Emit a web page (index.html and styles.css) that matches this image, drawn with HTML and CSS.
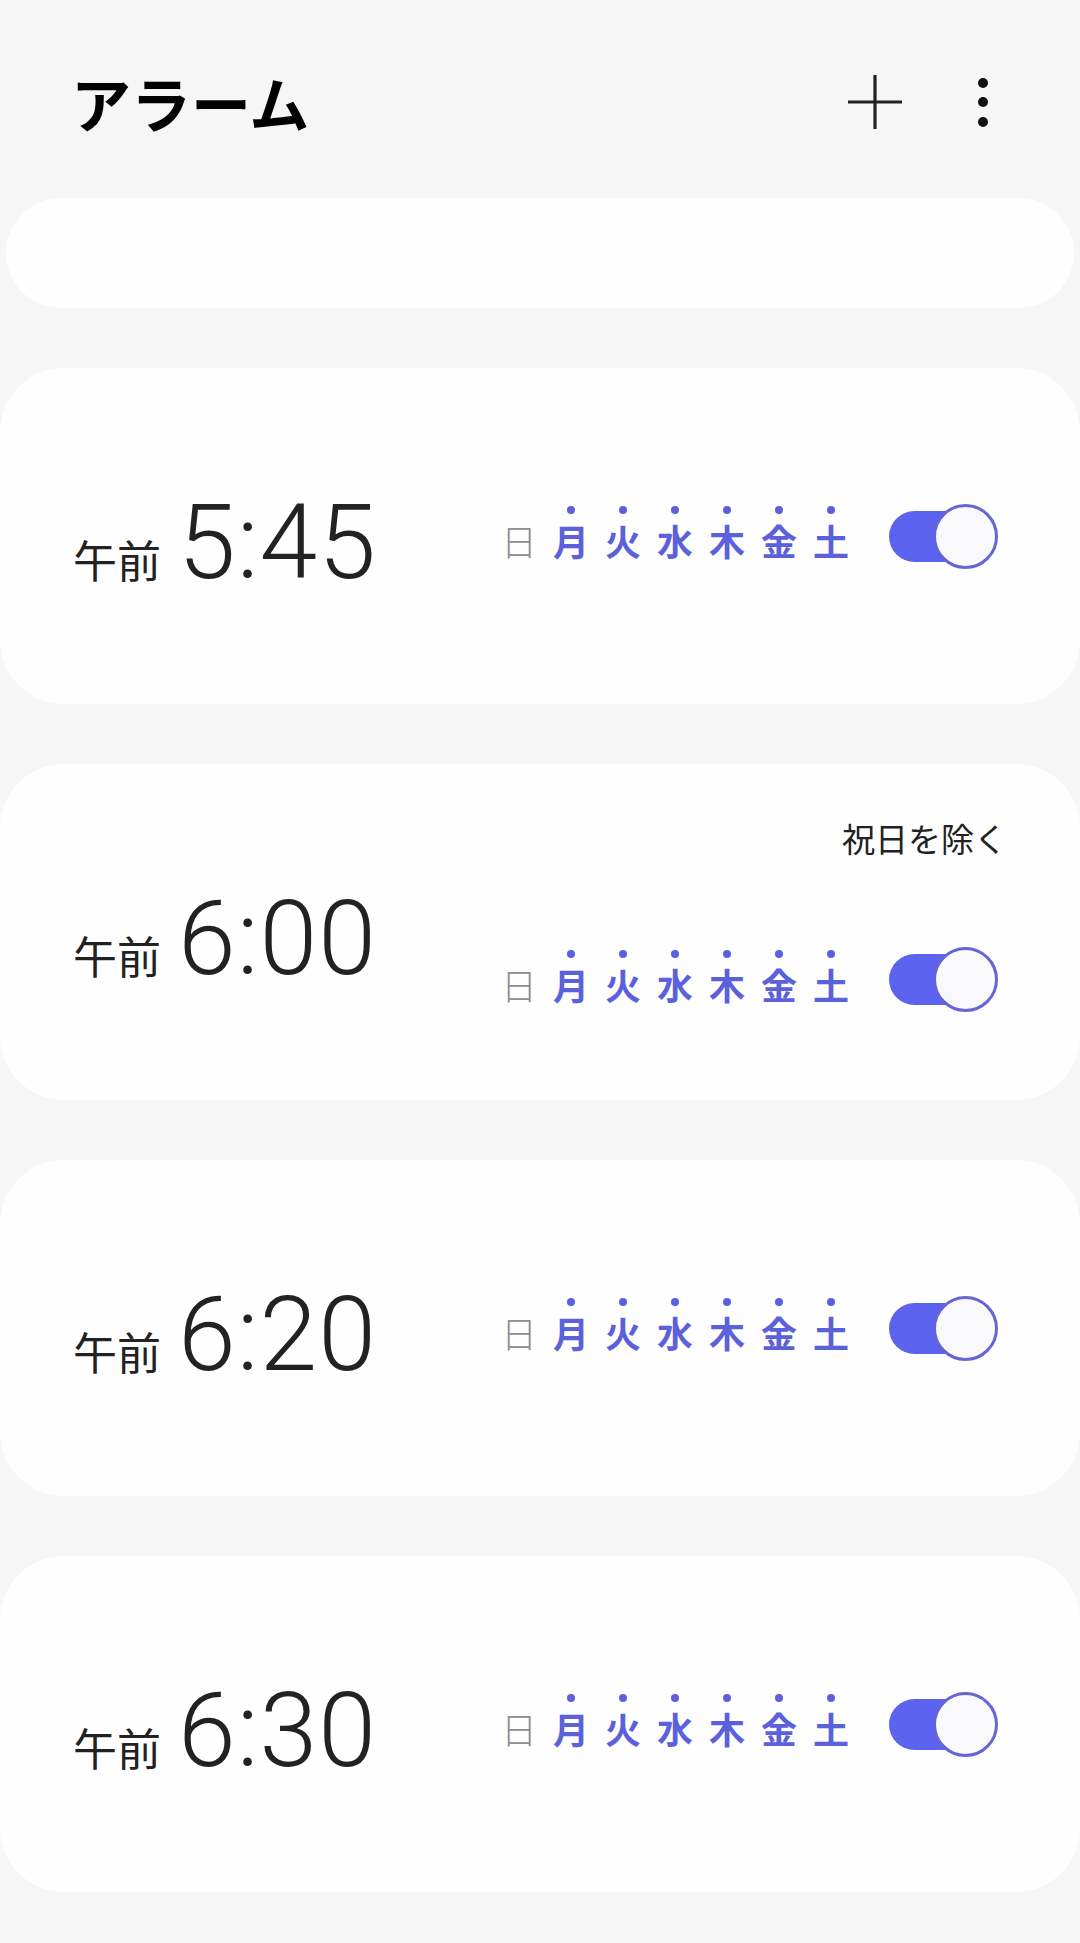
FILE: index.html
```html
<!DOCTYPE html>
<html lang="ja">
<head>
<meta charset="utf-8">
<title>アラーム</title>
<link rel="stylesheet" href="styles.css">
</head>
<body>
<div class="page">
  <header class="header">
    <h1 class="title">アラーム</h1>
    <div class="actions">
      <svg class="icon-plus" width="56" height="56" viewBox="0 0 56 56"><path d="M28 1V55M1 28H55" stroke="#222" stroke-width="3.2" fill="none"/></svg>
      <svg class="icon-more" width="20" height="56" viewBox="0 0 20 56"><circle cx="10" cy="9" r="5" fill="#111"/><circle cx="10" cy="28" r="5" fill="#111"/><circle cx="10" cy="48" r="5" fill="#111"/></svg>
    </div>
  </header>

  <main class="list">
    <div class="card card-empty"></div>

    <div class="card">
      <div class="time"><span class="ampm">午前</span><span class="clock">5:45</span></div>
      <div class="right">
        <div class="controls">
          <div class="days">
            <span class="day off"><i class="dot"></i><b>日</b></span>
            <span class="day"><i class="dot"></i><b>月</b></span>
            <span class="day"><i class="dot"></i><b>火</b></span>
            <span class="day"><i class="dot"></i><b>水</b></span>
            <span class="day"><i class="dot"></i><b>木</b></span>
            <span class="day"><i class="dot"></i><b>金</b></span>
            <span class="day"><i class="dot"></i><b>土</b></span>
          </div>
          <div class="toggle"><span class="track"></span><span class="thumb"></span></div>
        </div>
      </div>
    </div>

    <div class="card">
      <div class="time"><span class="ampm">午前</span><span class="clock">6:00</span></div>
      <div class="right has-note">
        <div class="note">祝日を除く</div>
        <div class="controls">
          <div class="days">
            <span class="day off"><i class="dot"></i><b>日</b></span>
            <span class="day"><i class="dot"></i><b>月</b></span>
            <span class="day"><i class="dot"></i><b>火</b></span>
            <span class="day"><i class="dot"></i><b>水</b></span>
            <span class="day"><i class="dot"></i><b>木</b></span>
            <span class="day"><i class="dot"></i><b>金</b></span>
            <span class="day"><i class="dot"></i><b>土</b></span>
          </div>
          <div class="toggle"><span class="track"></span><span class="thumb"></span></div>
        </div>
      </div>
    </div>

    <div class="card">
      <div class="time"><span class="ampm">午前</span><span class="clock">6:20</span></div>
      <div class="right">
        <div class="controls">
          <div class="days">
            <span class="day off"><i class="dot"></i><b>日</b></span>
            <span class="day"><i class="dot"></i><b>月</b></span>
            <span class="day"><i class="dot"></i><b>火</b></span>
            <span class="day"><i class="dot"></i><b>水</b></span>
            <span class="day"><i class="dot"></i><b>木</b></span>
            <span class="day"><i class="dot"></i><b>金</b></span>
            <span class="day"><i class="dot"></i><b>土</b></span>
          </div>
          <div class="toggle"><span class="track"></span><span class="thumb"></span></div>
        </div>
      </div>
    </div>

    <div class="card">
      <div class="time"><span class="ampm">午前</span><span class="clock">6:30</span></div>
      <div class="right">
        <div class="controls">
          <div class="days">
            <span class="day off"><i class="dot"></i><b>日</b></span>
            <span class="day"><i class="dot"></i><b>月</b></span>
            <span class="day"><i class="dot"></i><b>火</b></span>
            <span class="day"><i class="dot"></i><b>水</b></span>
            <span class="day"><i class="dot"></i><b>木</b></span>
            <span class="day"><i class="dot"></i><b>金</b></span>
            <span class="day"><i class="dot"></i><b>土</b></span>
          </div>
          <div class="toggle"><span class="track"></span><span class="thumb"></span></div>
        </div>
      </div>
    </div>
  </main>
</div>
</body>
</html>
```

FILE: styles.css
```css
* { box-sizing: border-box; }

html, body {
  margin: 0;
  padding: 0;
  background: #f6f6f6;
}

body {
  width: 1080px;
  min-height: 1943px;
  font-family: "Noto Sans CJK JP", "Noto Sans", sans-serif;
  color: #222;
}

.page {
  padding-top: 66px;
}

.header {
  display: flex;
  align-items: center;
  justify-content: space-between;
  height: 72px;
  padding: 0 87px 0 71px;
}

.title {
  margin: 0;
  font-size: 60px;
  line-height: 72px;
  font-weight: 700;
  color: #000;
}

.actions {
  display: flex;
  align-items: center;
  gap: 70px;
}

.icon-plus, .icon-more { display: block; }

.list {
  display: flex;
  flex-direction: column;
  gap: 60px;
  margin-top: 60px;
}

.card {
  background: #fefefe;
  height: 336px;
  border-radius: 64px;
  display: flex;
  align-items: center;
  justify-content: space-between;
  padding: 0 82px 0 73px;
}

.card-empty {
  height: 110px;
  border-radius: 55px;
  margin: 0 6px;
}

.time {
  display: flex;
  align-items: baseline;
  gap: 17px;
  margin-top: 13px;
}

.ampm {
  font-size: 44px;
  line-height: 1;
  color: #222;
}

.clock {
  font-family: Roboto, "Liberation Sans", sans-serif;
  font-weight: 300;
  font-size: 104px;
  line-height: 1;
  letter-spacing: 1px;
  color: #222;
}

.right {
  display: flex;
  flex-direction: column;
  align-items: flex-end;
}

.right.has-note {
  margin-bottom: 34px;
}

.note {
  font-size: 33px;
  line-height: 40px;
  color: #222;
  margin-right: -9px;
  margin-bottom: 89px;
}

.controls {
  display: flex;
  align-items: center;
  gap: 40px;
}

.days {
  display: flex;
  gap: 16px;
  margin-bottom: 8px;
}

.day {
  display: flex;
  flex-direction: column;
  align-items: center;
  gap: 8px;
  width: 36px;
}

.dot {
  display: block;
  width: 8px;
  height: 8px;
  border-radius: 50%;
  background: #5b60db;
}

.day b {
  display: block;
  font-size: 36px;
  line-height: 36px;
  font-weight: 700;
  color: #5b60db;
}

.day.off .dot { visibility: hidden; }

.day.off b {
  font-weight: 300;
  color: #8e8e8e;
}

.toggle {
  position: relative;
  width: 109px;
  height: 65px;
}

.track {
  position: absolute;
  left: 0;
  top: 7px;
  width: 90px;
  height: 51px;
  border-radius: 26px;
  background: #5c63ee;
}

.thumb {
  position: absolute;
  right: 0;
  top: 0;
  width: 65px;
  height: 65px;
  border-radius: 50%;
  background: #f9f9fb;
  border: 3px solid #6665d6;
}
```
